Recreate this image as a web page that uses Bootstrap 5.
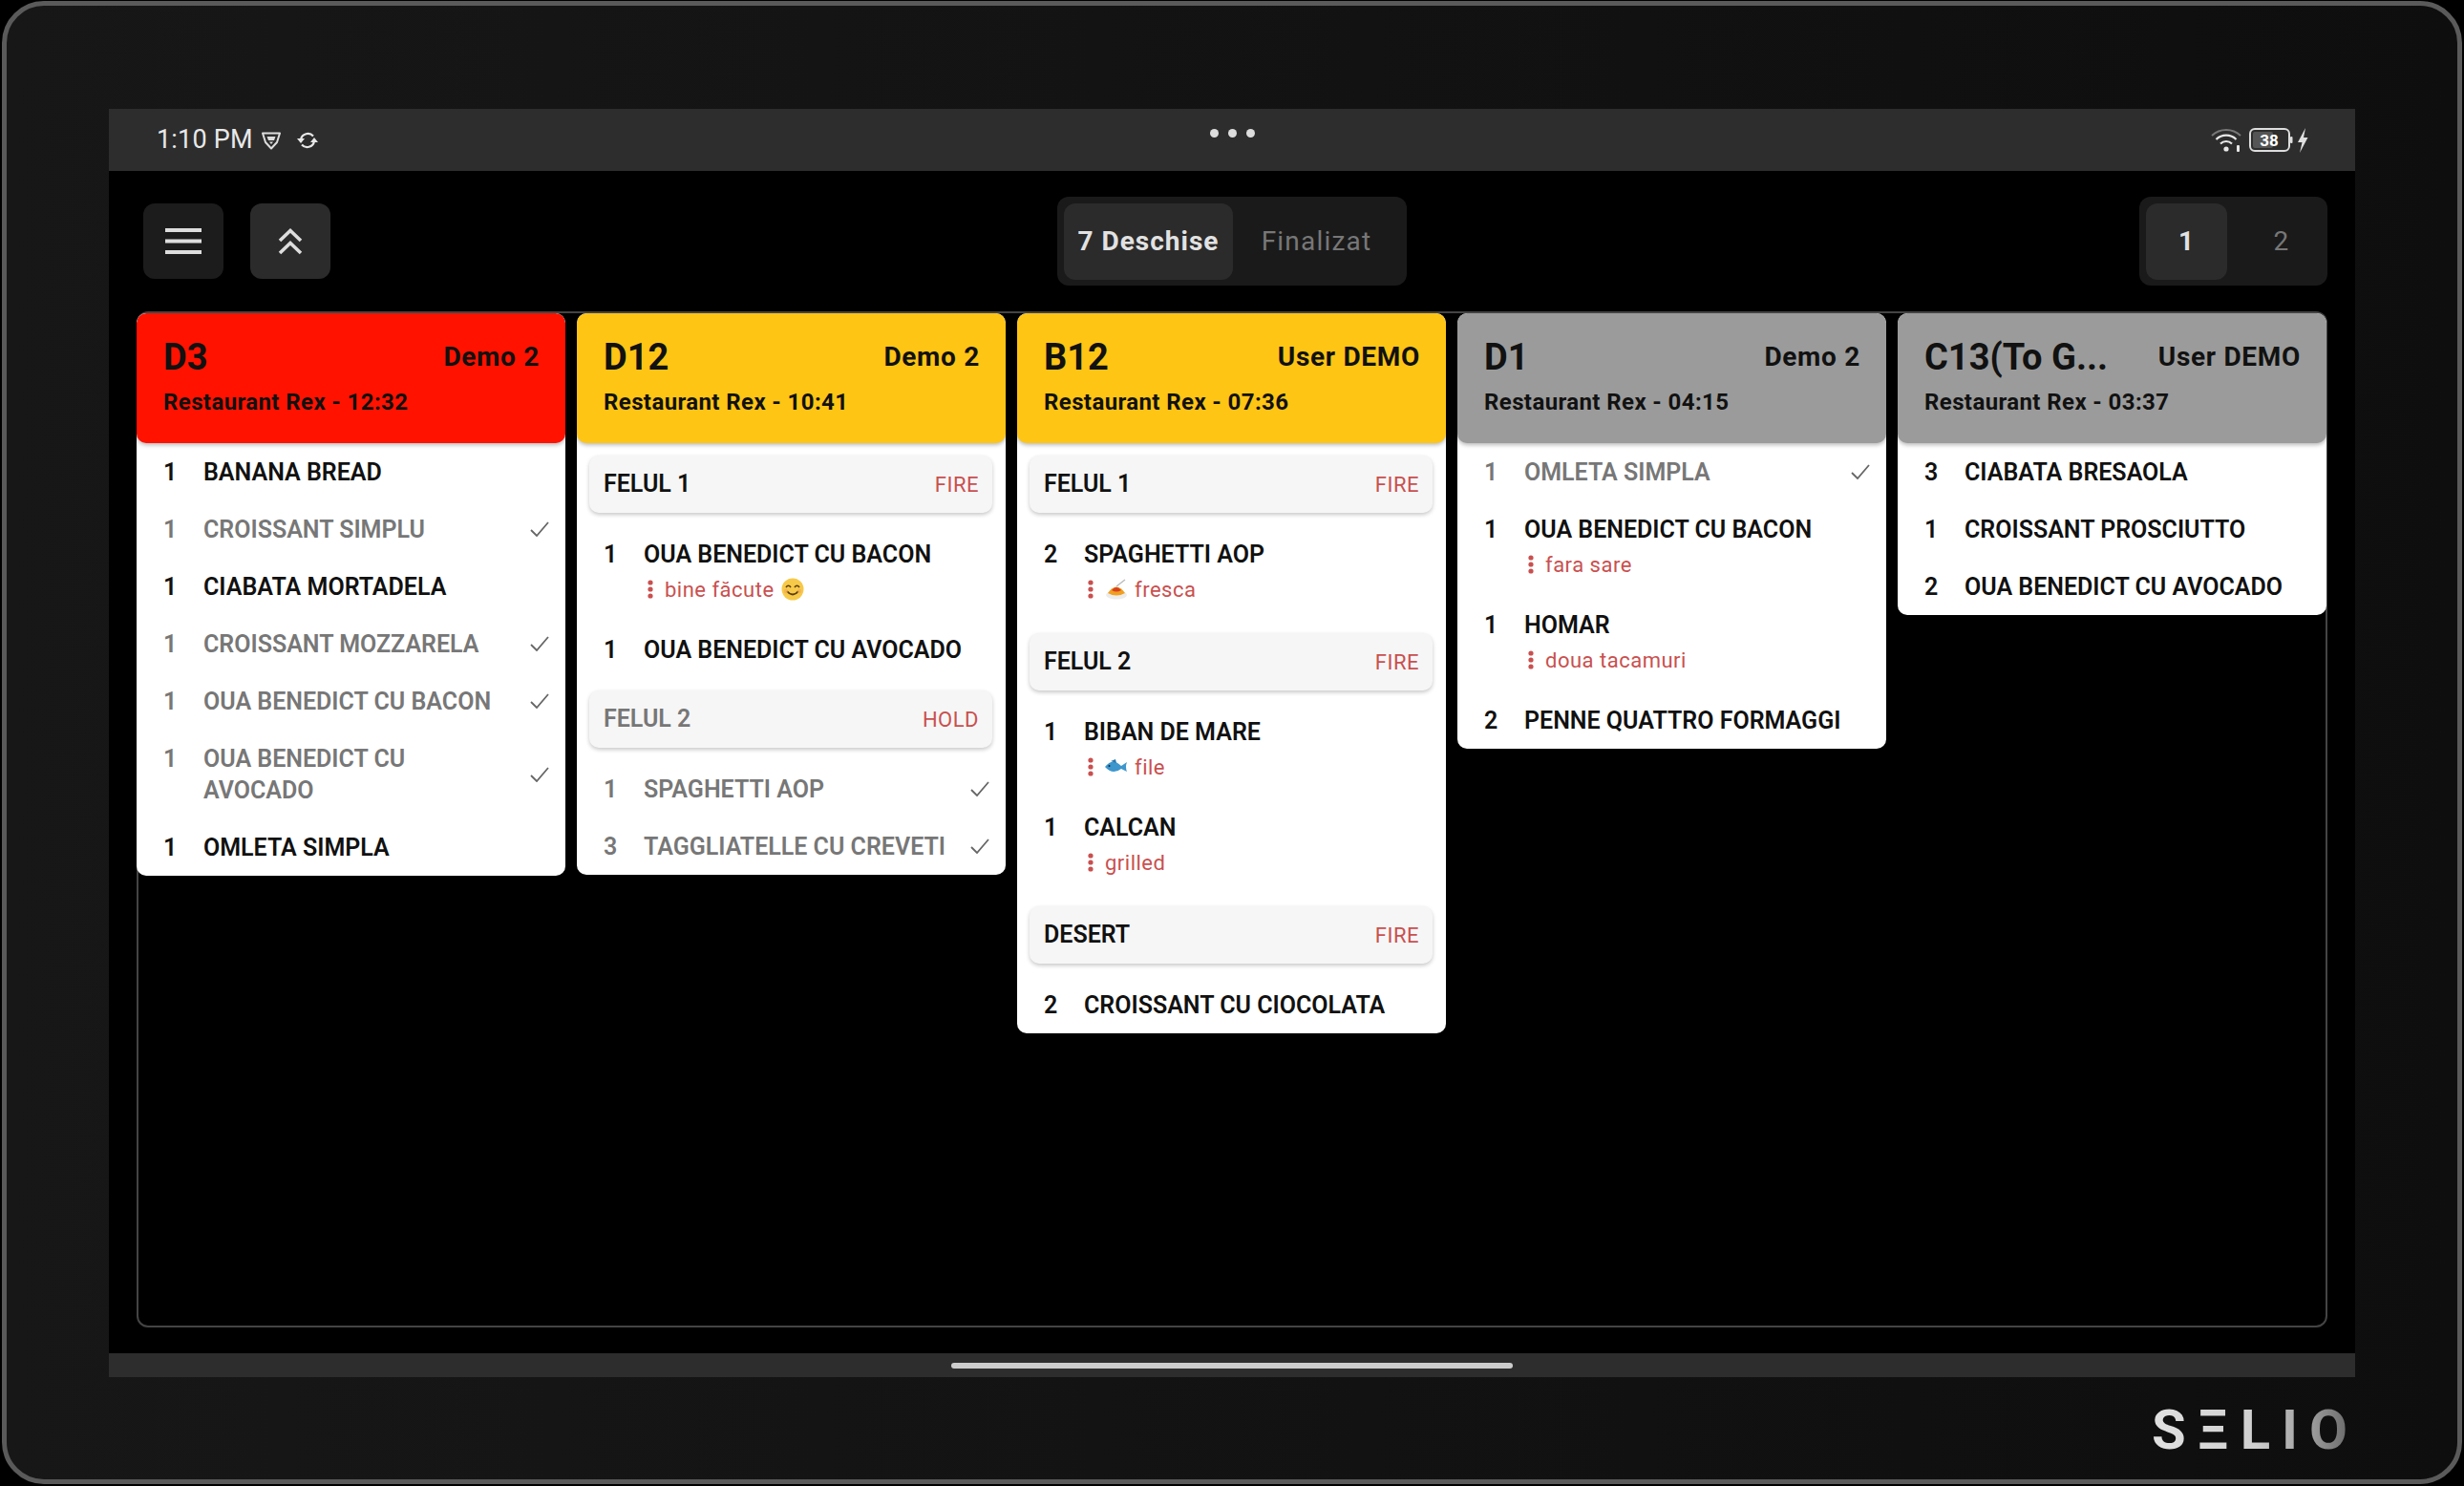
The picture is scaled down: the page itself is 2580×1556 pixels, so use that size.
<!DOCTYPE html>
<html lang="ro">
<head>
<meta charset="utf-8">
<title>KDS</title>
<link href="https://cdn.jsdelivr.net/npm/bootstrap@5.3.0/dist/css/bootstrap.min.css" rel="stylesheet">
<style>
html,body{margin:0;background:#000;width:2580px;height:1556px;overflow:hidden;font-family:Roboto,"Liberation Sans",sans-serif}
.device{width:2576px;height:1553px;margin:1px 2px;border:5px solid #5a5a5a;border-radius:44px;background:linear-gradient(90deg,#171717,#0e0e0e);padding:108px 107px 0}
.screen{height:1328px;background:#000}
.statusbar{height:65px;background:#2d2d2d;color:#e8e8e8;padding:0 49px 0 50px;display:grid;grid-template-columns:1fr auto 1fr;align-items:center}
.clock{font-size:27px;line-height:1;letter-spacing:.2px}
.sdots{gap:10px;margin-bottom:15px}
.sdots i{display:block;width:9px;height:9px;border-radius:50%;background:#ddd}
.toolbar{height:147px;padding:0 29px;display:grid;grid-template-columns:1fr auto 1fr;align-items:center}
.tbtn.btn{width:84px;height:79px;border:0;border-radius:12px;padding:0;display:flex;align-items:center;justify-content:center;background:#1c1c1c}
.tbtn.tb-on.btn{background:#2b2b2b}
.tools{padding-left:7px;gap:28px}
.seg{height:93px;padding:6.5px 7px;background:#1a1a1a;border-radius:12px}
.seg .btn{height:80px;border:0;border-radius:12px;padding:0;font-size:28px;color:#777;background:transparent;letter-spacing:1.2px}
.seg .btn.seg-on{background:#2b2b2b;color:#e2e2e2;font-weight:700;letter-spacing:1px}
.tab-a{width:177px}.tab-b{width:175px}
.pg-a{width:85px}.pg-b{width:98px;padding-left:16px!important}
.board{height:1064px;margin:0 29px;padding-top:2px;gap:12px;align-items:flex-start;border-radius:12px;box-shadow:inset 0 0 0 2px #444}
.ticket.card{width:449px;flex:none;border:0;border-radius:10px;background:#fff;color:#111;overflow:hidden}
.thead{height:136px;padding:26px 27px 26px 28px;border-radius:10px;box-shadow:0 2px 4px rgba(0,0,0,.28);position:relative;color:#111}
.t-red{background:#ff1200}.t-yel{background:#ffc515}.t-gry{background:#9b9b9b}
.ttl{font-size:38px;line-height:40px;font-weight:700}
.who{font-size:28px;line-height:40px;font-weight:700;letter-spacing:.7px}
.sub{font-size:24px;line-height:33px;font-weight:700;margin-top:11px;letter-spacing:.4px}
.ord-row{padding:13.5px 17px 13.5px 28px;font-size:25px;line-height:33px;font-weight:600;color:#111}
.qty{width:42px;flex:none}
.tick{flex:none;margin-left:14px}
.is-done{color:#777}
.modn{font-size:22px;line-height:33px;font-weight:400;color:#c9504f;margin-top:4px;margin-bottom:3px;letter-spacing:.5px;gap:7px}
.kebab{margin-left:4px;margin-right:5px;flex:none}
.emo{flex:none}
.course{height:60px;margin:13px 14px 13px 13px;padding:0 14px 0 15px;background:#f6f6f6;border-radius:10px;box-shadow:0 2px 4px rgba(0,0,0,.22);font-size:25px;font-weight:600;color:#111}
.course.is-done{color:#777}
.fire{font-size:22px;font-weight:400;color:#c9504f;letter-spacing:.5px}
.gap-strip{height:27px}
.navbar-strip{height:25px;background:#2d2d2d}
.home-bar{width:588px;height:6px;border-radius:3px;background:#ccc}
.bezel-b{padding:26px 0 0 0}
.brand{font-family:Roboto,"Liberation Sans",sans-serif;font-weight:700;font-size:58px;line-height:58px;letter-spacing:12px;margin-right:-4px;background:linear-gradient(90deg,#e0e0e0 0%,#d0d0d0 50%,#9a9a9a 78%,#5c5c5c 100%);-webkit-background-clip:text;background-clip:text;color:transparent}
</style>
</head>
<body>
<svg width="0" height="0" class="position-absolute">
<defs>
<symbol id="tk" viewBox="0 0 20 16"><path d="M1 9 L7 15 L19 1" fill="none" stroke="#666" stroke-width="1.8"/></symbol>
<symbol id="kb" viewBox="0 0 6 20"><circle cx="3" cy="3" r="2.6" fill="#c9504f"/><circle cx="3" cy="10" r="2.6" fill="#c9504f"/><circle cx="3" cy="17" r="2.6" fill="#c9504f"/></symbol>
</defs>
</svg>
<div class="device">
<div class="screen">

<div class="statusbar">
  <div class="d-flex align-items-center">
    <span class="clock">1:10 PM</span>
    <svg class="ms-2" width="22" height="20" viewBox="0 0 22 20"><path d="M2 2.500 H20 L17 12 L11 18.500 L5 12 Z" fill="none" stroke="#ddd" stroke-width="2" stroke-linejoin="round"/><path d="M6.500 6 H15.500 L14 10 H8 Z" fill="#ddd"/><path d="M9 11.500 H13 L11 14 Z" fill="#ddd"/></svg>
    <svg class="ms-3" width="22" height="18" viewBox="0 0 22 18"><path d="M4 8 A7.500 7.500 0 0 1 17 4.500" fill="none" stroke="#e8e8e8" stroke-width="2.200"/><path d="M18 10 A7.500 7.500 0 0 1 5 13.500" fill="none" stroke="#e8e8e8" stroke-width="2.200"/><path d="M0 7 H8 L4 12 Z M22 11 H14 L18 6 Z" fill="#e8e8e8"/></svg>
  </div>
  <div class="sdots d-flex"><i></i><i></i><i></i></div>
  <div class="d-flex align-items-center justify-content-end">
    <svg width="32" height="26" viewBox="0 0 32 26"><path d="M1 8 A22 22 0 0 1 31 8" fill="none" stroke="#777" stroke-width="2"/><path d="M5.500 12 A15 15 0 0 1 26.500 12" fill="none" stroke="#e8e8e8" stroke-width="2.200"/><path d="M10 16.500 A8.500 8.500 0 0 1 22 16.500" fill="none" stroke="#e8e8e8" stroke-width="2.200"/><circle cx="16" cy="22" r="2.600" fill="#e8e8e8"/><rect x="27" y="18" width="3" height="7" rx="1" fill="#e8e8e8"/></svg>
    <svg class="ms-2" width="46" height="26" viewBox="0 0 46 26"><rect x="1" y="1" width="41" height="23" rx="5" fill="#2d2d2d" stroke="#ddd" stroke-width="2"/><rect x="4" y="4" width="21" height="17" rx="2" fill="#555"/><rect x="43" y="9" width="2.500" height="7" rx="1" fill="#ddd"/><text x="21" y="19" text-anchor="middle" font-family="Roboto,sans-serif" font-size="17" font-weight="700" fill="#fff">38</text></svg>
    <svg class="ms-1" width="12" height="26" viewBox="0 0 12 26"><path d="M9 0 L1 15 H5.500 L3 26 L11.500 10 H7 Z" fill="#e0e0e0"/></svg>
  </div>
</div>

<div class="toolbar">
  <div class="tools d-flex">
    <button class="btn tbtn" type="button" aria-label="Meniu"><svg width="38" height="27" viewBox="0 0 38 27"><path d="M0 2 H38 M0 13.500 H38 M0 25 H38" stroke="#ddd" stroke-width="4"/></svg></button>
    <button class="btn tbtn tb-on" type="button" aria-label="Sus"><svg width="26" height="28" viewBox="0 0 26 28"><path d="M2 13 L13 2.500 L24 13 M2 26 L13 15.500 L24 26" fill="none" stroke="#ddd" stroke-width="3.600"/></svg></button>
  </div>
  <div class="seg d-flex">
    <button class="btn seg-on tab-a" type="button">7 Deschise</button>
    <button class="btn tab-b" type="button">Finalizat</button>
  </div>
  <div class="d-flex justify-content-end">
    <div class="seg d-flex">
      <button class="btn seg-on pg-a" type="button">1</button>
      <button class="btn pg-b" type="button">2</button>
    </div>
  </div>
</div>

<div class="board d-flex">

  <div class="card ticket">
    <div class="thead t-red">
      <div class="d-flex justify-content-between"><span class="ttl">D3</span><span class="who">Demo 2</span></div>
      <div class="sub">Restaurant Rex - 12:32</div>
    </div>
    <div class="ord-row d-flex"><span class="qty">1</span><span>BANANA BREAD</span></div>
    <div class="ord-row d-flex align-items-center is-done"><span class="qty align-self-start">1</span><span class="flex-grow-1">CROISSANT SIMPLU</span><svg class="tick" width="20" height="16"><use href="#tk"/></svg></div>
    <div class="ord-row d-flex"><span class="qty">1</span><span>CIABATA MORTADELA</span></div>
    <div class="ord-row d-flex align-items-center is-done"><span class="qty align-self-start">1</span><span class="flex-grow-1">CROISSANT MOZZARELA</span><svg class="tick" width="20" height="16"><use href="#tk"/></svg></div>
    <div class="ord-row d-flex align-items-center is-done"><span class="qty align-self-start">1</span><span class="flex-grow-1">OUA BENEDICT CU BACON</span><svg class="tick" width="20" height="16"><use href="#tk"/></svg></div>
    <div class="ord-row d-flex align-items-center is-done"><span class="qty align-self-start">1</span><span class="flex-grow-1">OUA BENEDICT CU AVOCADO</span><svg class="tick" width="20" height="16"><use href="#tk"/></svg></div>
    <div class="ord-row d-flex"><span class="qty">1</span><span>OMLETA SIMPLA</span></div>
  </div>

  <div class="card ticket">
    <div class="thead t-yel">
      <div class="d-flex justify-content-between"><span class="ttl">D12</span><span class="who">Demo 2</span></div>
      <div class="sub">Restaurant Rex - 10:41</div>
    </div>
    <div class="course d-flex align-items-center justify-content-between"><span>FELUL 1</span><span class="fire">FIRE</span></div>
    <div class="ord-row d-flex"><span class="qty">1</span><div><div>OUA BENEDICT CU BACON</div>
      <div class="modn d-flex align-items-center"><svg class="kebab" width="6" height="20"><use href="#kb"/></svg><span>bine făcute</span>
      <svg class="flex-shrink-0" width="24" height="24" viewBox="0 0 24 24"><circle cx="12" cy="12" r="11.500" fill="#f7c948"/><path d="M5 10 Q7.500 6.500 10 10 M14 10 Q16.500 6.500 19 10" fill="none" stroke="#5a3d10" stroke-width="1.600"/><path d="M6 14 Q12 21 18 14" fill="none" stroke="#5a3d10" stroke-width="1.800"/><circle cx="5" cy="14" r="2.200" fill="#f2a65a" opacity=".6"/><circle cx="19" cy="14" r="2.200" fill="#f2a65a" opacity=".6"/></svg></div></div></div>
    <div class="ord-row d-flex"><span class="qty">1</span><span>OUA BENEDICT CU AVOCADO</span></div>
    <div class="course is-done d-flex align-items-center justify-content-between"><span>FELUL 2</span><span class="fire">HOLD</span></div>
    <div class="ord-row d-flex align-items-center is-done"><span class="qty align-self-start">1</span><span class="flex-grow-1">SPAGHETTI AOP</span><svg class="tick" width="20" height="16"><use href="#tk"/></svg></div>
    <div class="ord-row d-flex align-items-center is-done"><span class="qty align-self-start">3</span><span class="flex-grow-1">TAGGLIATELLE CU CREVETI</span><svg class="tick" width="20" height="16"><use href="#tk"/></svg></div>
  </div>

  <div class="card ticket">
    <div class="thead t-yel">
      <div class="d-flex justify-content-between"><span class="ttl">B12</span><span class="who">User DEMO</span></div>
      <div class="sub">Restaurant Rex - 07:36</div>
    </div>
    <div class="course d-flex align-items-center justify-content-between"><span>FELUL 1</span><span class="fire">FIRE</span></div>
    <div class="ord-row d-flex"><span class="qty">2</span><div><div>SPAGHETTI AOP</div>
      <div class="modn d-flex align-items-center"><svg class="kebab" width="6" height="20"><use href="#kb"/></svg>
      <svg class="emo" width="24" height="22" viewBox="0 0 24 22"><ellipse cx="12" cy="17" rx="11" ry="4.500" fill="#ececec"/><path d="M3 15 Q12 2 21 15 Q12 20 3 15Z" fill="#f0a020"/><path d="M7 12 Q12 6 17 12 Q12 15 7 12Z" fill="#d8401f"/><path d="M12 8 L21 1" stroke="#bbb" stroke-width="1.500"/></svg><span>fresca</span></div></div></div>
    <div class="course d-flex align-items-center justify-content-between"><span>FELUL 2</span><span class="fire">FIRE</span></div>
    <div class="ord-row d-flex"><span class="qty">1</span><div><div>BIBAN DE MARE</div>
      <div class="modn d-flex align-items-center"><svg class="kebab" width="6" height="20"><use href="#kb"/></svg>
      <svg class="emo" width="24" height="16" viewBox="0 0 24 16"><path d="M0 8 Q8 -2 17 7 L23 3 Q21 8 23 13 L17 10 Q8 17 0 8Z" fill="#3d96cc"/><path d="M6 2 L11 0 L12 4Z" fill="#2a78ad"/><circle cx="4.500" cy="7" r="1" fill="#123"/></svg><span>file</span></div></div></div>
    <div class="ord-row d-flex"><span class="qty">1</span><div><div>CALCAN</div>
      <div class="modn d-flex align-items-center"><svg class="kebab" width="6" height="20"><use href="#kb"/></svg><span>grilled</span></div></div></div>
    <div class="course d-flex align-items-center justify-content-between"><span>DESERT</span><span class="fire">FIRE</span></div>
    <div class="ord-row d-flex"><span class="qty">2</span><span>CROISSANT CU CIOCOLATA</span></div>
  </div>

  <div class="card ticket">
    <div class="thead t-gry">
      <div class="d-flex justify-content-between"><span class="ttl">D1</span><span class="who">Demo 2</span></div>
      <div class="sub">Restaurant Rex - 04:15</div>
    </div>
    <div class="ord-row d-flex align-items-center is-done"><span class="qty align-self-start">1</span><span class="flex-grow-1">OMLETA SIMPLA</span><svg class="tick" width="20" height="16"><use href="#tk"/></svg></div>
    <div class="ord-row d-flex"><span class="qty">1</span><div><div>OUA BENEDICT CU BACON</div>
      <div class="modn d-flex align-items-center"><svg class="kebab" width="6" height="20"><use href="#kb"/></svg><span>fara sare</span></div></div></div>
    <div class="ord-row d-flex"><span class="qty">1</span><div><div>HOMAR</div>
      <div class="modn d-flex align-items-center"><svg class="kebab" width="6" height="20"><use href="#kb"/></svg><span>doua tacamuri</span></div></div></div>
    <div class="ord-row d-flex"><span class="qty">2</span><span>PENNE QUATTRO FORMAGGI</span></div>
  </div>

  <div class="card ticket">
    <div class="thead t-gry">
      <div class="d-flex justify-content-between"><span class="ttl">C13(To G...</span><span class="who">User DEMO</span></div>
      <div class="sub">Restaurant Rex - 03:37</div>
    </div>
    <div class="ord-row d-flex"><span class="qty">3</span><span>CIABATA BRESAOLA</span></div>
    <div class="ord-row d-flex"><span class="qty">1</span><span>CROISSANT PROSCIUTTO</span></div>
    <div class="ord-row d-flex"><span class="qty">2</span><span>OUA BENEDICT CU AVOCADO</span></div>
  </div>

</div>
<div class="gap-strip"></div>
<div class="navbar-strip d-flex align-items-center justify-content-center"><div class="home-bar"></div></div>
</div>
<div class="bezel-b d-flex justify-content-end"><span class="brand">SΞLIO</span></div>
</div>
</body>
</html>
